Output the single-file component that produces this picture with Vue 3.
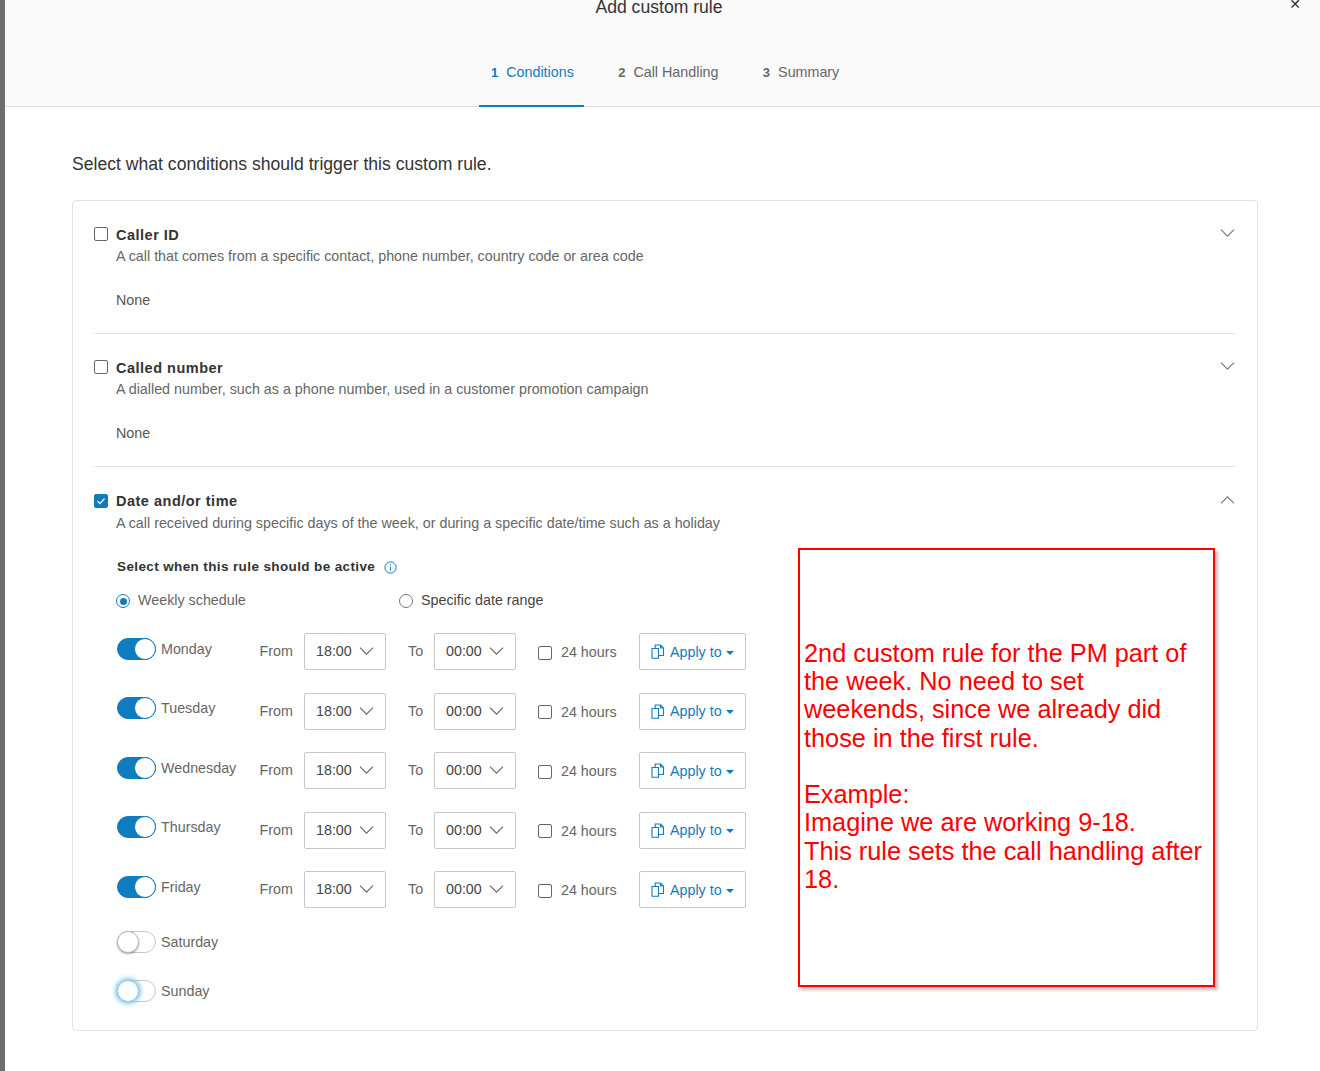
<script setup>
const sections = [
  { title: 'Caller ID', desc: 'A call that comes from a specific contact, phone number, country code or area code' },
  { title: 'Called number', desc: 'A dialled number, such as a phone number, used in a customer promotion campaign' }
]
const days = ['Monday', 'Tuesday', 'Wednesday', 'Thursday', 'Friday']
</script>

<template>
  <div class="page">
    <div class="edge"></div>
    <div class="modal">
      <header class="head">
        <h1 class="title">Add custom rule</h1>
        <span class="close">✕</span>
        <nav class="steps">
          <div class="step active"><b>1</b>Conditions</div>
          <div class="step"><b>2</b>Call Handling</div>
          <div class="step"><b>3</b>Summary</div>
        </nav>
      </header>
      <main class="body">
        <p class="lead">Select what conditions should trigger this custom rule.</p>
        <div class="card">
          <section v-for="s in sections" :key="s.title" class="sec">
            <div class="sec-top">
              <span class="cb"></span>
              <span class="sec-title">{{ s.title }}</span>
              <svg class="chev" width="15" height="8" viewBox="0 0 15 8"><path d="M1 .7l6.5 6.5L14 .7" fill="none" stroke="#777" stroke-width="1.1"/></svg>
            </div>
            <div class="sec-desc">{{ s.desc }}</div>
            <div class="none">None</div>
          </section>
          <section class="sec last">
            <div class="sec-top">
              <span class="cb on"><svg width="14" height="14" viewBox="0 0 14 14"><path d="M3.5 7.2l2.4 2.4 4.6-5" fill="none" stroke="#fff" stroke-width="1.4"/></svg></span>
              <span class="sec-title">Date and/or time</span>
              <svg class="chev" width="15" height="8" viewBox="0 0 15 8"><path d="M1 7.3L7.5.8 14 7.3" fill="none" stroke="#777" stroke-width="1.1"/></svg>
            </div>
            <div class="sec-desc">A call received during specific days of the week, or during a specific date/time such as a holiday</div>
            <div class="active-label">
              Select when this rule should be active
              <svg class="info" width="13" height="13" viewBox="0 0 13 13"><circle cx="6.5" cy="6.5" r="5.6" fill="none" stroke="#0f7cc0"/><path d="M6.5 5.6v4M6.5 3.2v1.2" stroke="#0f7cc0"/></svg>
            </div>
            <div class="radios">
              <label class="radio-wrap"><span class="radio sel"></span>Weekly schedule</label>
              <label class="radio-wrap second"><span class="radio"></span><span class="dark">Specific date range</span></label>
            </div>
            <div v-for="d in days" :key="d" class="row">
              <span class="toggle on"><i></i></span>
              <span class="day">{{ d }}</span>
              <span class="lbl from">From</span>
              <span class="sel-box">18:00<svg width="15" height="8" viewBox="0 0 15 8"><path d="M1 .7l6.5 6.5L14 .7" fill="none" stroke="#666" stroke-width="1.1"/></svg></span>
              <span class="lbl to">To</span>
              <span class="sel-box">00:00<svg width="15" height="8" viewBox="0 0 15 8"><path d="M1 .7l6.5 6.5L14 .7" fill="none" stroke="#666" stroke-width="1.1"/></svg></span>
              <span class="cb small"></span>
              <span class="hours">24 hours</span>
              <span class="apply">
                <svg width="14" height="15" viewBox="0 0 14 15"><path d="M1 4.5h6.5v9.8H1zM4.2 4.5V1h5.3l3 3v7.5H7.5M9.5 1v3h3" fill="none" stroke="#0f7cc0" stroke-width="1.1"/></svg>
                Apply to<i class="caret"></i>
              </span>
            </div>
            <div class="row off first-off">
              <span class="toggle"><i></i></span>
              <span class="day">Saturday</span>
            </div>
            <div class="row off">
              <span class="toggle focus"><i></i></span>
              <span class="day">Sunday</span>
            </div>
          </section>
          <aside class="note">
            <p>2nd custom rule for the PM part of the week. No need to set weekends, since we already did those in the first rule.</p>
            <p class="gap">Example:<br>Imagine we are working 9-18.<br>This rule sets the call handling after 18.</p>
          </aside>
        </div>
      </main>
    </div>
  </div>
</template>

<style>
html, body { margin: 0; background: #fff; }
</style>

<style scoped>
.page { display: flex; width: 1320px; height: 1071px; overflow: hidden; font-family: "Liberation Sans", Arial, sans-serif; color: #333; background: #fff; }
.edge { width: 5px; flex: none; background: #6e6e6e; }
.modal { flex: 1; min-width: 0; }
.head { position: relative; height: 106px; background: #fafafa; border-bottom: 1px solid #e2e2e2; }
.title { margin: 0; padding-right: 7px; height: 16px; line-height: 16px; font-size: 17.6px; font-weight: 400; text-align: center; color: #333; position: relative; top: -1px; }
.close { position: absolute; top: -3px; right: 19px; font-family: "DejaVu Sans", sans-serif; font-size: 14px; font-weight: 700; line-height: 14px; color: #333; }
.steps { display: flex; margin-top: 37px; padding-left: 474px; }
.step { height: 53px; line-height: 38px; padding: 0 10px 0 12px; margin-right: 22.4px; font-size: 14.3px; color: #666; box-sizing: border-box; white-space: nowrap; }
.step b { margin-right: 8px; font-size: 13px; }
.step.active { color: #0f7cc0; border-bottom: 2px solid #0f7cc0; height: 54px; }
.body { padding: 0 62px 0 67px; }
.lead { margin: 0; padding-top: 47px; height: 46px; line-height: 21px; font-size: 17.6px; color: #333; }
.card { position: relative; height: 831px; box-sizing: border-box; border: 1px solid #e2e2e2; border-radius: 4px; padding: 0 22px; }
.sec { height: 133px; box-sizing: border-box; padding-top: 23px; border-bottom: 1px solid #e2e2e2; }
.sec.last { height: auto; border: 0; padding-top: 24px; }
.sec-top { display: flex; align-items: center; height: 20px; margin-left: -1px; }
.sec-title { font-size: 14.5px; font-weight: 700; letter-spacing: .5px; color: #333; margin-left: 8px; margin-top: 1px; }
.last .sec-title { margin-top: 0; }
.chev { margin-left: auto; margin-top: -2px; }
.cb { width: 14px; height: 14px; box-sizing: border-box; flex: none; display: inline-block; border: 1px solid #666; border-radius: 2px; background: #fff; }
.cb.on { background: #0f7cc0; border-color: #0f7cc0; display: flex; align-items: center; justify-content: center; }
.cb.on svg { flex: none; }
.sec-desc { margin: 1px 0 0 21px; line-height: 22px; font-size: 14.3px; color: #666; }
.none { margin: 22px 0 0 21px; line-height: 22px; font-size: 14.3px; color: #555; }
.active-label { display: flex; align-items: center; margin: 21px 0 0 22px; height: 22px; font-size: 13.5px; font-weight: 700; letter-spacing: .38px; color: #333; }
.info { margin-left: 9px; margin-top: 2px; }
.radios { display: flex; margin: 12px 0 11.15px 21px; height: 22px; align-items: center; font-size: 14.3px; color: #666; }
.radio-wrap { display: flex; align-items: center; width: 283px; }
.radio-wrap.second { width: auto; }
.dark { color: #444; }
.radio { width: 12px; height: 12px; border: 1.3px solid #777; border-radius: 50%; margin-right: 8px; margin-top: 2px; position: relative; flex: none; box-sizing: content-box; }
.radio.sel { border-color: #0f7cc0; }
.radio.sel::after { content: ""; position: absolute; inset: 2.5px; border-radius: 50%; background: #0f7cc0; }
.row { display: flex; align-items: center; height: 59.5px; margin-left: 22px; font-size: 14.3px; color: #666; }
.row.off { height: 49px; }
.row.first-off { margin-top: .95px; }
.toggle { position: relative; width: 37px; height: 20px; flex: none; border: 1px solid #c8c8c8; border-radius: 11px; background: #fff; margin-top: -6px; }
.toggle i { position: absolute; left: -1px; top: -1px; width: 20px; height: 20px; border: 1px solid #bbb; border-radius: 50%; background: #fff; box-shadow: 0 1px 2px rgba(0,0,0,.35); }
.toggle.on { background: #0f7cc0; border-color: #0f7cc0; }
.toggle.on i { left: auto; right: -1px; border-color: #0f7cc0; box-shadow: none; }
.toggle.focus i { border-color: #8cc8e6; box-shadow: 0 0 4px 2px #8cc8e6; }
.day { margin-left: 5px; width: 99px; flex: none; margin-top: -6px; }
.lbl { flex: none; }
.from { width: 44px; margin-top: -1px; margin-left: -.5px; padding-right: .5px; }
.to { margin-left: 22px; width: 26px; margin-top: -1px; }
.sel-box { flex: none; display: flex; align-items: center; justify-content: space-between; width: 82px; height: 37px; box-sizing: border-box; padding: 0 11px 1px 11px; border: 1px solid #c8c8c8; border-radius: 2px; color: #444; font-size: 14.3px; }
.cb.small { margin-left: 22px; margin-top: 2px; }
.hours { margin-left: 9px; width: 78px; flex: none; margin-top: 1px; }
.apply { flex: none; display: flex; align-items: center; width: 107px; height: 37px; box-sizing: border-box; padding-left: 11px; border: 1px solid #c8c8c8; border-radius: 2px; color: #0f7cc0; font-size: 14.3px; }
.apply svg { margin-right: 5px; }
.caret { width: 0; height: 0; margin-left: 4px; margin-top: 2px; border: 4px solid transparent; border-top-color: #0f7cc0; border-bottom: 0; }
.note { position: absolute; left: 725px; top: 347px; width: 417px; height: 439px; box-sizing: border-box; border: 2px solid #f00; box-shadow: 3px 3px 3px rgba(0,0,0,.25); background: #fff; padding: 0 4px 3px; display: flex; flex-direction: column; justify-content: center; color: #f00; font-size: 25.3px; line-height: 28.25px; }
.note p { margin: 0; }
.note .gap { margin-top: 28.25px; }
</style>
